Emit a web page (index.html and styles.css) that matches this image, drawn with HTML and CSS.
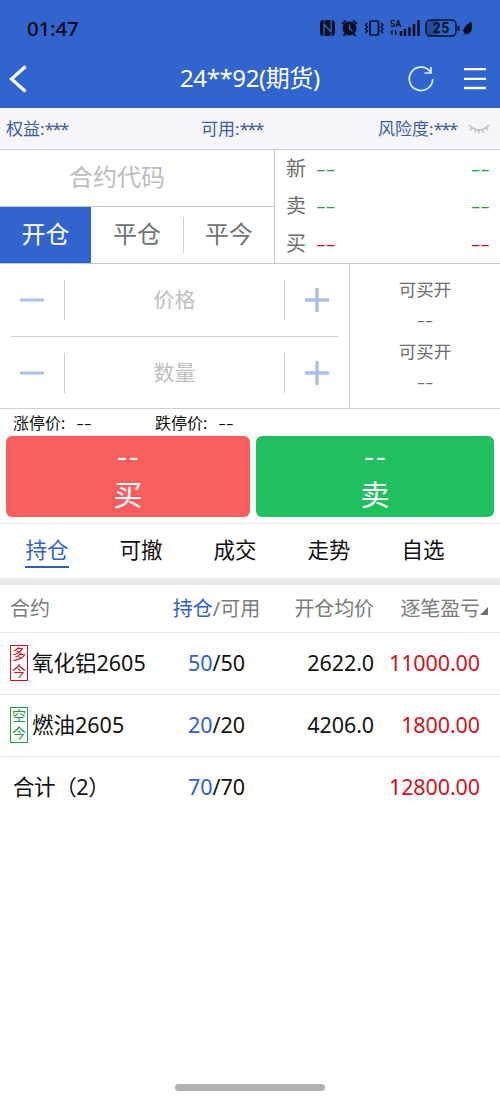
FILE: index.html
```html
<!DOCTYPE html>
<html lang="zh-CN">
<head>
<meta charset="utf-8">
<title>期货交易</title>
<link rel="stylesheet" href="styles.css">
</head>
<body>
<div class="screen">
  <header class="top">
    <div class="status">
      <span class="clock">01:47</span>
      <svg class="status-icons" width="156" height="20" viewBox="0 0 156 20">
        <rect x="0" y="1" width="15" height="16" rx="3.500" fill="#0a1020"/>
        <path d="M4 17V5L11 13V1M4.500 1V3M11 17V15" fill="none" stroke="#3165cd" stroke-width="1.300"/>
        <circle cx="29.500" cy="9.500" r="7" fill="#0a1020"/>
        <path d="M22 5l4-3.500M37 5l-4-3.500M25 15l-1.500 2M34 15l1.500 2" stroke="#0a1020" stroke-width="2" fill="none"/>
        <path d="M29.500 5.500v4.500l3 2" fill="none" stroke="#3165cd" stroke-width="1.400"/>
        <rect x="50" y="2" width="8.500" height="14" rx="1" fill="none" stroke="#0a1020" stroke-width="1.700"/>
        <path d="M47.500 4l-2 2 2 2-2 2 2 2-2 2M61 4l2 2-2 2 2 2-2 2 2 2" fill="none" stroke="#0a1020" stroke-width="1.300"/>
        <text x="70" y="8" class="net">5A</text>
        <path d="M72 16v-4l-1.300 1.500M75.500 11v4l1.300-1.500" fill="none" stroke="#0a1020" stroke-width="1.200"/>
        <path d="M81 17v-5M85 17v-7M89.500 17v-9M94 17v-12M98.500 17v-16" stroke="#0a1020" stroke-width="2.500"/>
        <path d="M110 1.500h8v15h-8q-4-1-4-5v-5q0-4 4-5z" fill="#234a9d"/>
        <rect x="106" y="1" width="30" height="16" rx="4.500" fill="none" stroke="#0a1020" stroke-width="1.400"/>
        <text x="121.200" y="14" text-anchor="middle" class="battery">25</text>
        <path d="M138.500 7v5" stroke="#0a1020" stroke-width="2"/>
        <path d="M151 3c1.500 6 .5 11-4 12-5-1-4.500-7 4-12zM143.500 16l4-5" fill="#0a1020" stroke="#0a1020" stroke-width=".8"/>
      </svg>
    </div>
    <nav class="nav">
      <svg class="back" width="20" height="30" viewBox="0 0 20 30"><path d="M18.500 2.500L4.500 15L18.500 27.500" fill="none" stroke="#fff" stroke-width="3.200"/></svg>
      <h1 class="title">24**92(期货)</h1>
      <svg class="refresh" width="28" height="28" viewBox="0 0 28 28"><path d="M23.300 6.700A11.700 11.700 0 1 0 25.700 14M24 2v6h-6.500" fill="none" stroke="#d9efff" stroke-width="1.700"/></svg>
      <svg class="menu" width="24" height="24" viewBox="0 0 24 24"><path d="M1 2.200h22M1 11.800h22M1 21h22" stroke="#fff" stroke-width="2.300"/></svg>
    </nav>
  </header>

  <section class="account">
    <span>权益:<b class="mask">***</b></span>
    <span class="available">可用:<b class="mask">***</b></span>
    <span class="risk">风险度:<b class="mask">***</b></span>
    <svg width="22" height="14" viewBox="0 0 22 14"><path d="M1 3q10 10 20 0M4 6l-2 2.500M8 7.500l-1 3M11 8v3.500M14.500 7.500l1 3M18 5.500l2 2.500" fill="none" stroke="#b9bbc3" stroke-width="1.400"/></svg>
  </section>

  <section class="contract">
    <div class="entry">
      <div class="code">合约代码</div>
      <div class="sides">
        <div class="side active">开仓</div>
        <div class="side">平仓</div>
        <div class="side split">平今</div>
      </div>
    </div>
    <div class="quotes">
      <div class="quote"><span>新</span><b class="dash green">--</b><b class="dash green">--</b></div>
      <div class="quote"><span>卖</span><b class="dash green">--</b><b class="dash green">--</b></div>
      <div class="quote"><span>买</span><b class="dash red">--</b><b class="dash red">--</b></div>
    </div>
  </section>

  <section class="order">
    <div class="steppers">
      <div class="stepper">
        <svg width="24" height="24" viewBox="0 0 24 24"><path d="M0 12h24" stroke="#aac0ea" stroke-width="3"/></svg>
        <div class="field">价格</div>
        <svg width="24" height="24" viewBox="0 0 24 24"><path d="M0 12h24M12 0v24" stroke="#aac0ea" stroke-width="3.400"/></svg>
      </div>
      <div class="stepper">
        <svg width="24" height="24" viewBox="0 0 24 24"><path d="M0 12h24" stroke="#aac0ea" stroke-width="3"/></svg>
        <div class="field">数量</div>
        <svg width="24" height="24" viewBox="0 0 24 24"><path d="M0 12h24M12 0v24" stroke="#aac0ea" stroke-width="3.400"/></svg>
      </div>
    </div>
    <div class="capacity">
      <span>可买开</span><b class="dash">--</b>
      <span>可买开</span><b class="dash">--</b>
    </div>
  </section>

  <section class="limits">
    <div class="limit">涨停价:<b class="dash">--</b></div>
    <div class="limit">跌停价:<b class="dash">--</b></div>
  </section>

  <section class="actions">
    <div class="action buy"><b class="dash">--</b><span>买</span></div>
    <div class="action sell"><b class="dash">--</b><span>卖</span></div>
  </section>

  <nav class="tabs">
    <div class="tab"><span class="current">持仓</span></div>
    <div class="tab"><span>可撤</span></div>
    <div class="tab"><span>成交</span></div>
    <div class="tab"><span>走势</span></div>
    <div class="tab"><span>自选</span></div>
  </nav>

  <section class="positions">
    <div class="row head">
      <span class="name">合约</span>
      <span class="held"><i>持仓</i>/可用</span>
      <span class="price">开仓均价</span>
      <span class="profit">逐笔盈亏</span>
      <svg class="sort" width="8" height="8" viewBox="0 0 8 8"><path d="M8 0v8H0z" fill="#707070"/></svg>
    </div>
    <div class="row">
      <span class="name"><span class="badge red"><em>多</em><em>今</em></span>氧化铝2605</span>
      <span class="held"><i>50</i>/50</span>
      <span class="price">2622.0</span>
      <span class="profit">11000.00</span>
    </div>
    <div class="row">
      <span class="name"><span class="badge green"><em>空</em><em>今</em></span>燃油2605</span>
      <span class="held"><i>20</i>/20</span>
      <span class="price">4206.0</span>
      <span class="profit">1800.00</span>
    </div>
    <div class="row total">
      <span class="name">合计（2）</span>
      <span class="held"><i>70</i>/70</span>
      <span class="price"></span>
      <span class="profit">12800.00</span>
    </div>
  </section>

  <div class="home-bar"></div>
</div>
</body>
</html>
```

FILE: styles.css
```css
* { box-sizing: border-box; }
body { margin: 0; background: #fff; }
i, em, b { font-style: normal; font-weight: 400; }
svg { display: block; flex: none; }

.screen {
  width: 500px;
  height: 1099px;
  display: flex;
  flex-direction: column;
  overflow: hidden;
  background: #fff;
  color: #111;
  font-family: "Noto Sans", "Noto Sans CJK SC", sans-serif;
  white-space: nowrap;
}

.dash {
  font-family: "Open Sans", "Noto Sans", sans-serif;
  font-weight: 350;
  font-size: 30px;
  line-height: 20px;
  height: 20px;
}

.green { color: #239b42; }
.red { color: #d0131b; }

/* Header */
.top { height: 108px; flex: none; background: #3165cd; border-bottom: 1px solid #3b60b4; }
.status { height: 50px; padding: 7px 27px 0; display: flex; justify-content: space-between; align-items: center; }
.clock { font-size: 20.500px; font-weight: 500; letter-spacing: -.2px; line-height: 28px; padding-bottom: 2px; color: #050a14; }
.status-icons { margin: 1px -3px 0 0; overflow: visible; }
.net { font: 700 9px Roboto, sans-serif; fill: #0a1020; }
.battery { font: 700 14px Roboto, sans-serif; letter-spacing: .5px; fill: #0a1020; }
.nav { height: 57px; padding: 0 13px 0 7px; display: grid; grid-template-columns: 20px 1fr 28px 24px; align-items: center; }
.title { margin: -1px 0 0 153px; font-size: 24px; font-weight: 400; letter-spacing: -.4px; line-height: 40px; color: #fff; }
.refresh { margin-left: -28px; }

/* Account summary */
.account {
  height: 42px;
  flex: none;
  padding: 0 10px 0 6px;
  display: grid;
  grid-template-columns: 195px 177px 90px 22px;
  align-items: center;
  background: #f6f6fa;
  border-bottom: 1px solid #cdcdd0;
  color: #3a5ca8;
  font-size: 17px;
  line-height: 24px;
}
.mask { letter-spacing: -1.700px; }

/* Contract and quotes */
.contract { height: 114px; flex: none; display: grid; grid-template-columns: 274px 1fr; border-bottom: 1px solid #c8c8c8; }
.entry { display: grid; grid-template-rows: 57px 56px; }
.code { padding-left: 69px; border-bottom: 1px solid #c8c8cc; color: #bcbcbe; font-size: 24px; line-height: 54px; }
.sides { display: grid; grid-template-columns: 91px 92px 91px; align-items: center; }
.side { text-align: center; font-size: 24px; line-height: 34px; padding-bottom: 2px; color: #707173; }
.side.active { height: 56px; line-height: 54px; background: #3165cd; color: #fff; }
.side.split { border-left: 1px solid #d0d0d3; }
.quotes { padding: 0 10px 0 11px; border-left: 1px solid #c8c8c8; display: grid; grid-template-rows: 37.500px 37.500px 38px; }
.quote { display: grid; grid-template-columns: 30px 1fr auto; align-items: center; color: #6c6c6c; font-size: 20px; line-height: 30px; }
.quote .dash { line-height: 18px; }

/* Order entry */
.order { height: 145px; flex: none; display: grid; grid-template-columns: 349px 1fr; border-bottom: 1px solid #cfcfcf; }
.steppers { padding: 0 11px; display: grid; grid-template-rows: 73px 71px; }
.stepper { padding: 0 9px; display: grid; grid-template-columns: 24px 1fr 24px; align-items: center; }
.stepper:first-child { border-bottom: 1px solid #cfcfcf; }
.field { margin: 0 20px; height: 40px; border: solid #cfcfcf; border-width: 0 1px; text-align: center; color: #bfbfbf; font-size: 21px; line-height: 38px; }
.capacity { padding-top: 10px; border-left: 1px solid #cfcfcf; display: flex; flex-direction: column; align-items: center; color: #6c6c6c; font-size: 17.500px; line-height: 31px; }
.capacity .dash { height: 31px; font-size: 26px; line-height: 28px; }

/* Limit prices */
.limits { height: 27px; flex: none; padding-left: 13px; display: grid; grid-template-columns: 142px 1fr; align-items: center; font-size: 16px; line-height: 26px; }
.limit { display: flex; gap: 11px; align-items: center; }
.limit .dash { font-size: 24px; line-height: 17px; }

/* Buy and sell */
.actions { height: 88px; flex: none; padding: 0 6px 6px; display: grid; grid-template-columns: 244px 238px; gap: 6px; border-bottom: 1px solid #e8e8e8; }
.action { border-radius: 6px; display: flex; flex-direction: column; align-items: center; color: #fff; font-size: 29px; line-height: 38px; }
.action .dash { height: 40px; padding-left: 2px; font-size: 30px; font-weight: 400; letter-spacing: 2px; line-height: 40px; transform: none; }
.buy { background: #f95f5f; }
.sell { background: #20c060; }

/* Tabs */
.tabs { height: 61px; flex: none; padding-top: 7px; display: grid; grid-template-columns: repeat(5, 94px); border-bottom: 7px solid #ebebeb; font-size: 21.500px; line-height: 38px; }
.tab { display: flex; justify-content: center; align-items: flex-start; }
.current { height: 37px; border-bottom: 2px solid #315fb8; color: #3562c0; }

/* Positions */
.row { position: relative; height: 62px; padding-bottom: 1px; display: grid; grid-template-columns: 172px 89px 113px 106px; align-items: center; border-bottom: 1px solid #e6e6e6; font-size: 21.500px; line-height: 30px; }
.name { padding-left: 10px; display: flex; align-items: center; gap: 4px; }
.held { text-align: center; }
.held i { color: #315fc8; }
.price, .profit { text-align: right; letter-spacing: -.1px; }
.profit { color: #d0131b; }
.head { height: 48px; padding-bottom: 0; font-size: 20px; color: #7b7b7b; }
.head .profit { color: #7b7b7b; }
.sort { position: absolute; left: 480px; top: 22px; }
.total { padding-bottom: 2px; border-bottom: 0; }
.total .name { padding-left: 13px; letter-spacing: -.4px; }
.badge { width: 18px; height: 36px; border: 1px solid currentColor; display: grid; grid-template-rows: 17px 17px; justify-items: center; font-size: 14px; line-height: 16px; }

.home-bar { width: 150px; height: 7px; margin: auto auto 8px; border-radius: 4px; background: #b0b0b0; }
```
